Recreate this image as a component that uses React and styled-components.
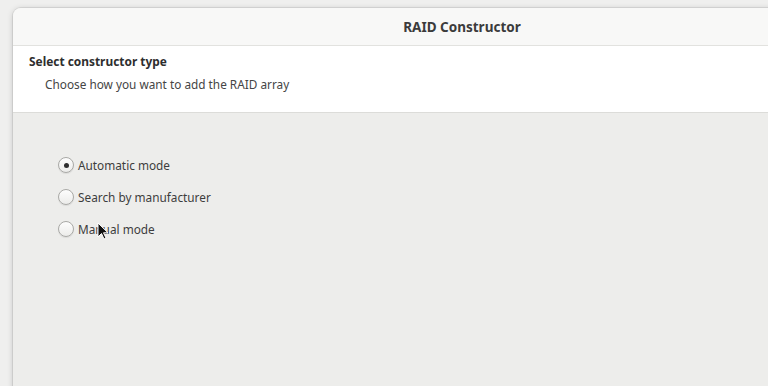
import React from 'react';
import styled, { createGlobalStyle } from 'styled-components';

const Global = createGlobalStyle`
    html, body {
        margin: 0;
        padding: 0;
        width: 768px;
        height: 386px;
        overflow: hidden;
        background: #efefee;
        font-family: "Noto Sans", "Open Sans", sans-serif;
        color: #3d3d3d;
    }
`;

const Desk = styled.div`
    position: relative;
    height: 386px;
    padding: 8px 0 0 13px;
    box-sizing: border-box;
    overflow: hidden;
`;

const Window = styled.div`
    width: 898px;
    height: 420px;
    display: flex;
    flex-direction: column;
    border-radius: 8px 8px 0 0;
    overflow: hidden;
    box-shadow: 0 0 0 1px rgba(0, 0, 0, 0.07), 0 1px 6px rgba(0, 0, 0, 0.18);
`;

const TitleBar = styled.div`
    height: 37px;
    flex: none;
    display: flex;
    align-items: center;
    justify-content: center;
    background: #f8f8f7;
    border-bottom: 1px solid #e2e2df;
    font-size: 13.5px;
    font-weight: 700;
    color: #3b3b3b;
`;

const Header = styled.div`
    height: 67px;
    flex: none;
    background: #ffffff;
    border-bottom: 1px solid #dcdcd9;
    padding: 6px 16px 0;
    box-sizing: border-box;
`;

const HeaderTitle = styled.div`
    font-size: 11.9px;
    font-weight: 700;
    color: #2e2e2e;
    line-height: 18px;
`;

const HeaderText = styled.div`
    font-size: 11.8px;
    color: #454545;
    line-height: 18px;
    margin: 5px 0 0 16px;
`;

const Body = styled.div`
    flex: 1;
    background: #ededeb;
    padding: 43px 0 0 45px;
    display: flex;
    flex-direction: column;
    gap: 14px;
`;

const Option = styled.label`
    display: flex;
    align-items: center;
    gap: 4px;
    height: 18px;
    font-size: 11.8px;
    color: #3d3d3d;
`;

const Radio = styled.span`
    width: 14px;
    height: 14px;
    border-radius: 50%;
    border: 1px solid #a9a9a6;
    background: linear-gradient(#fdfdfd, #ececea);
    box-shadow: 0 1px 1px rgba(0, 0, 0, 0.08);
    display: flex;
    align-items: center;
    justify-content: center;
    &::after {
        content: '';
        width: 5px;
        height: 5px;
        border-radius: 50%;
        background: ${p => (p.$checked ? '#2e2e2e' : 'transparent')};
    }
`;

const Cursor = styled.svg`
    position: absolute;
    left: 97px;
    top: 222px;
`;

const options = [
    { label: 'Automatic mode', checked: true },
    { label: 'Search by manufacturer' },
    { label: 'Manual mode' },
];

const App = () => (
    <Desk>
        <Global />
        <Window>
            <TitleBar>RAID Constructor</TitleBar>
            <Header>
                <HeaderTitle>Select constructor type</HeaderTitle>
                <HeaderText>Choose how you want to add the RAID array</HeaderText>
            </Header>
            <Body>
                {options.map(o => (
                    <Option key={o.label}>
                        <Radio $checked={o.checked} />
                        {o.label}
                    </Option>
                ))}
            </Body>
        </Window>
        <Cursor width="12" height="19" viewBox="0 0 12 19">
            <path d="M1 1 L1 15 L4.5 11.5 L7 17 L9 16 L6.5 10.8 L11 10.8 Z" fill="#111" stroke="#fff" strokeWidth="1" />
        </Cursor>
    </Desk>
);

export default App;
